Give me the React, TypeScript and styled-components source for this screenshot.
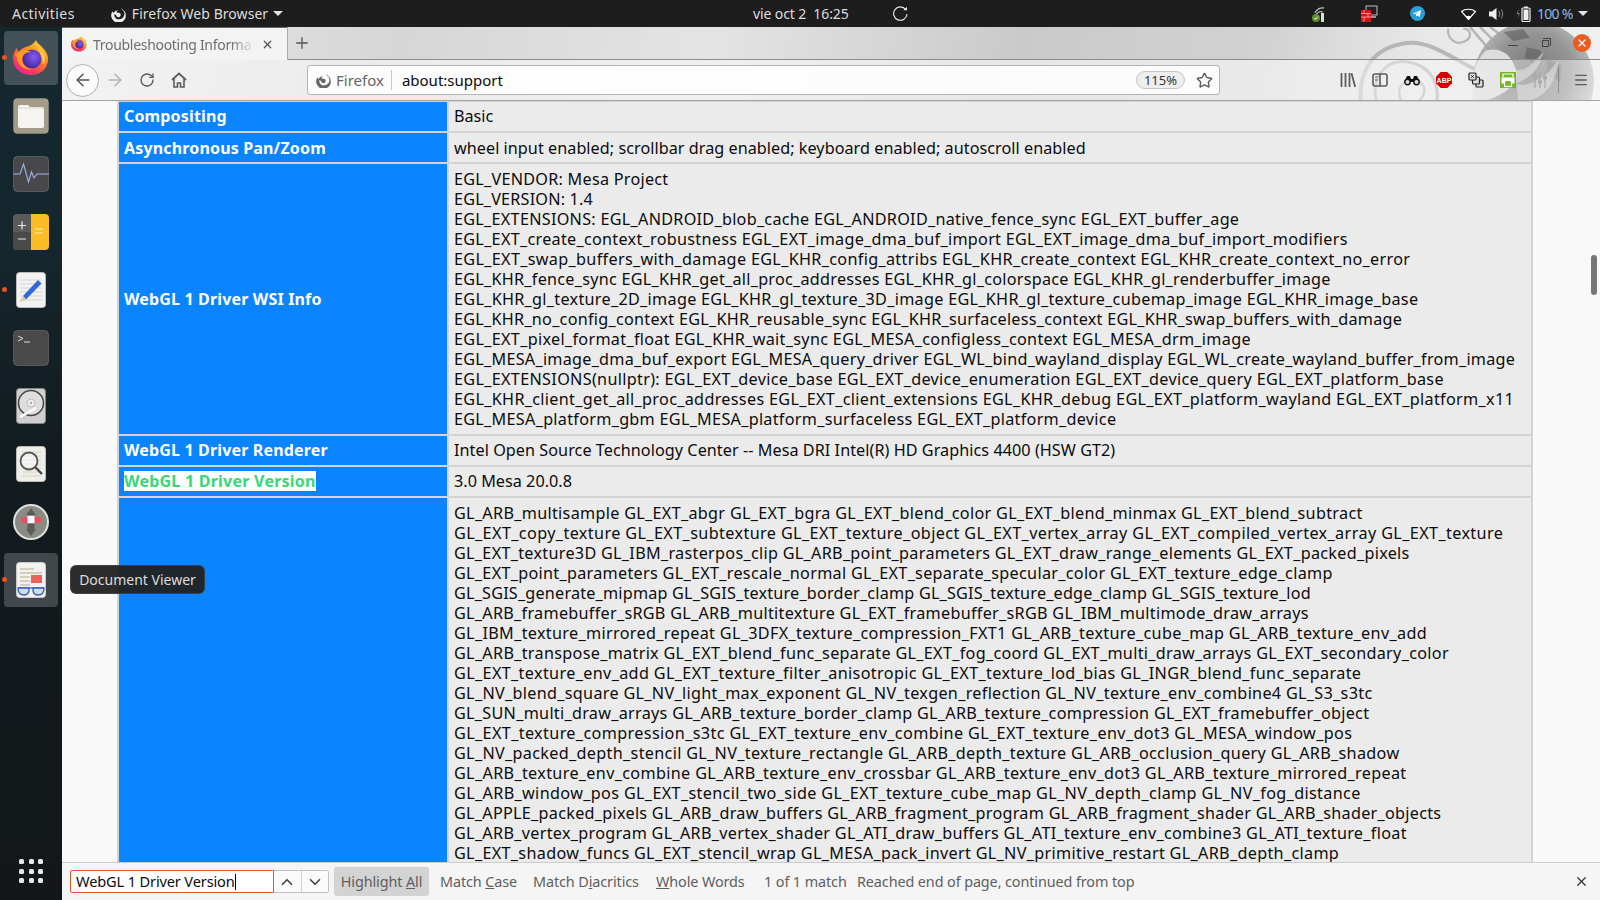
import React from 'react';
import styled, { createGlobalStyle } from 'styled-components';
import { ArrowLeft, ArrowRight, RotateCw, Star, X, Plus, ChevronUp, ChevronDown, Menu } from 'lucide-react';

const UI = `"Noto Sans", "Open Sans", sans-serif`;

const Global = createGlobalStyle`
  html, body { margin: 0; padding: 0; height: 100%; overflow: hidden; }
  #root { height: 100%; }
  * { box-sizing: border-box; }
`;

const Screen = styled.div`
  position: relative; width: 1600px; height: 900px; display: flex; flex-direction: column;
  font-family: ${UI}; overflow: hidden; background: #f9f9fa;
`;

/* ---------- GNOME top bar ---------- */
const TopBar = styled.header`
  height: 27px; flex: none; background: #1d1d1d; color: #dcdcdc; font-size: 14px; letter-spacing: -0.1px;
  display: grid; grid-template-columns: 700px 260px 1fr; align-items: center;
`;
const TopLeft = styled.div`display: flex; align-items: center; padding-left: 12px;`;
const Activities = styled.span`letter-spacing: 0.45px;`;
const AppMenu = styled.div`display: flex; align-items: center; gap: 5px; margin-left: 36px; letter-spacing: 0.05px;`;
const Caret = styled.span`
  width: 0; height: 0; border-left: 5px solid transparent; border-right: 5px solid transparent;
  border-top: 5px solid #e4e4e4; display: inline-block;
`;
const TopCenter = styled.div`display: flex; align-items: center; padding-left: 53px; gap: 44px; white-space: pre;`;
const TopRight = styled.div`display: flex; align-items: center; padding-left: 351px;`;
const Tray = styled.span<{ $w: number }>`display: flex; align-items: center; width: ${p => p.$w}px; flex: none;`;
const BatteryText = styled.span`color: #8fb8e8; margin-left: 6px; margin-right: 5px; white-space: nowrap; letter-spacing: -0.7px;`;

/* ---------- dock ---------- */
const Body = styled.div`flex: 1; display: flex; min-height: 0;`;
const Dock = styled.nav`
  width: 62px; flex: none; display: flex; flex-direction: column; align-items: center; padding-top: 4px; gap: 4px;
  background: linear-gradient(180deg, #14272f 0%, #15262d 25%, #121b1f 50%, #131719 100%);
`;
const DockItem = styled.div<{ $active?: boolean; $dot?: boolean }>`
  position: relative; width: 54px; height: 54px; flex: none; border-radius: 4px;
  display: flex; align-items: center; justify-content: center;
  background: ${p => (p.$active ? 'rgba(255,255,255,0.2)' : 'transparent')};
  &::before {
    content: ''; display: ${p => (p.$dot ? 'block' : 'none')}; position: absolute; left: -2px; top: 24px;
    width: 5px; height: 5px; border-radius: 50%; background: #e95420;
  }
`;
const DockGrid = styled.div`
  margin-top: auto; margin-bottom: 17px; display: grid; grid-template-columns: repeat(3, 5px); gap: 4.5px;
  padding: 0 2px;
`;
const DockDot = styled.span`width: 5px; height: 5px; border-radius: 1.5px; background: #e8e8e8;`;

/* ---------- browser window ---------- */
const Window = styled.main`flex: 1; min-width: 0; display: flex; flex-direction: column;`;
const Header = styled.div`
  position: relative; flex: none;
  background: linear-gradient(100deg, #e9e9e9 0%, #d6d6d6 22%, #e4e4e4 42%, #cacaca 62%, #d2d2d2 78%, #e8e8e8 88%, #f0f0f0 100%);
`;
const Persona = styled.svg`position: absolute; right: 0; top: 0; width: 270px; height: 75px; pointer-events: none;`;
const TabStrip = styled.div`
  position: relative; height: 33px; display: flex; align-items: stretch; border-bottom: 1px solid #8c8c8c;
`;
const Tab = styled.div`
  width: 225px; height: 33px; background: #f3f3f3; border-top: 1px solid #666; display: flex; align-items: center;
  padding: 0 13px 0 9px; gap: 6px; color: #6e6e6e; font-size: 14px; letter-spacing: -0.3px; box-shadow: 1px 0 0 #aaa;
`;
const TabTitle = styled.span`
  flex: 1; overflow: hidden; white-space: nowrap;
  -webkit-mask-image: linear-gradient(90deg, #000 85%, transparent 100%);
  mask-image: linear-gradient(90deg, #000 85%, transparent 100%);
`;
const NewTab = styled.div`width: 32px; display: flex; align-items: center; justify-content: center; color: #555; margin-left: -1px;`;
const WinControls = styled.div`margin-left: auto; display: flex; align-items: center; gap: 24px; padding-right: 9px;`;
const WinMin = styled.span`width: 10px; height: 1px; background: #444; margin-top: 5px;`;
const WinRestore = styled.span`
  position: relative; width: 7px; height: 7px; border: 1px solid #444; margin-top: 1px;
  &::after { content: ''; position: absolute; right: -3px; top: -3px; width: 7px; height: 7px; border: 1px solid #444; border-left: 0; border-bottom: 0; }
`;
const WinClose = styled.span`
  width: 18px; height: 18px; border-radius: 50%; background: #ef5c22; color: #fff; display: flex; align-items: center; justify-content: center;
`;
const NavBar = styled.div`
  position: relative; height: 41px; display: flex; align-items: center; padding-left: 4px;
  background: linear-gradient(90deg, rgba(248,248,248,0.62) 0%, rgba(248,248,248,0.62) 82%, rgba(248,248,248,0.34) 92%, rgba(248,248,248,0.5) 100%);
  border-bottom: 1px solid #a3a3a3;
`;
const BackBtn = styled.div`
  width: 33px; height: 33px; border-radius: 50%; background: #fbfbfb; border: 1px solid #b0b0b0; color: #555;
  display: flex; align-items: center; justify-content: center; flex: none;
`;
const NavBtn = styled.div<{ $dim?: boolean; $w?: number }>`
  width: ${p => p.$w ?? 32}px; height: 32px; flex: none; display: flex; align-items: center; justify-content: center;
  color: ${p => (p.$dim ? '#b3b3b3' : '#5c5c5c')};
`;
const UrlBar = styled.div`
  width: 913px; height: 30px; margin-left: 112px; flex: none; display: flex; align-items: center; border-radius: 3px;
  background: rgba(255,255,255,0.85); border: 1px solid #b5b5b5; font-size: 15px;
`;
const Identity = styled.div`
  display: flex; align-items: center; gap: 4px; padding: 0 7px 0 8px; height: 20px; border-right: 1px solid #c8c8c8;
  color: #666;
`;
const UrlText = styled.div`flex: 1; padding-left: 10px; color: #0c0c0d;`;
const ZoomPill = styled.div`
  width: 49px; height: 18px; border-radius: 9px; background: #eee; border: 1px solid #c4c4c4; font-size: 13px;
  display: flex; align-items: center; justify-content: center; color: #333; margin-right: 11px;
`;
const Stars = styled.div`width: 18px; margin-right: 5px; display: flex; color: #5c5c5c;`;
const Tools = styled.div`display: flex; align-items: center; margin-left: 112px;`;
const ToolSep = styled.span`width: 1px; height: 26px; background: rgba(90,90,90,0.45); margin: 0 14px 0 2px;`;

/* ---------- page ---------- */
const Content = styled.section`flex: 1; min-height: 0; overflow: hidden; background: #f9f9fa; position: relative; padding-left: 55px;`;
const Table = styled.table`
  width: 1416px; table-layout: fixed; margin-top: -1px; border-collapse: separate; border-spacing: 2px; background: #d4d4d6;
  font-size: 16.2px; line-height: 20px; color: #0c0c0d;
`;
const Th = styled.th<{ $h: number; $nudge: number }>`
  width: 328px; height: ${p => p.$h}px; padding: 0 5px ${p => p.$nudge * 2}px; background: #0a84ff; color: #fff; text-align: left; font-weight: 700;
  font-size: 16px; vertical-align: middle; letter-spacing: 0.16px;
`;
const Td = styled.td<{ $h: number; $nudge: number }>`
  height: ${p => p.$h}px; padding: ${p => 4.5 - p.$nudge}px 5px 0; background: #ebebeb; vertical-align: top; white-space: nowrap;
`;
const Line = styled.div<{ $ls: number }>`height: 20px; letter-spacing: ${p => p.$ls}px;`;
const Hit = styled.span`background: #fff; color: #38d878; display: inline-block; line-height: 20px; letter-spacing: 0.24px;`;
const ScrollThumb = styled.div`position: absolute; right: 3px; top: 154px; width: 6px; height: 40px; border-radius: 3px; background: #777;`;

/* ---------- find bar ---------- */
const FindBar = styled.footer`
  height: 38px; flex: none; background: #f5f5f5; border-top: 1px solid #cdcdcd; display: flex; align-items: center;
  padding-left: 8px; font-size: 14.4px; color: #5e5e5e; white-space: nowrap; letter-spacing: -0.1px;
`;
const FindGroup = styled.div`display: flex; width: 259px; height: 23px; border: 1px solid #c2c2c2; border-radius: 2px; flex: none; background: #fafafa;`;
const FindInput = styled.div`
  width: 204px; margin: -1px 0 -1px -1px; flex: none; background: #fff; border: 1px solid #e95420; border-radius: 2px 0 0 2px;
  padding: 0 5px; color: #0c0c0d; font-size: 14.6px; line-height: 21px; display: flex; align-items: center; letter-spacing: -0.15px;
`;
const Cursor = styled.span`width: 1px; height: 16px; background: #000; flex: none;`;
const FindArrow = styled.div`flex: 1; display: flex; align-items: center; justify-content: center; color: #444; & + & { border-left: 1px solid #d0d0d0; }`;
const Highlight = styled.div`
  height: 29px; width: 95px; border-radius: 3px; background: #d3d3d3; display: flex; align-items: center; justify-content: center; margin-left: 5px; flex: none;
`;
const FindLabel = styled.span<{ $ml: number; $w: number }>`margin-left: ${p => p.$ml}px; width: ${p => p.$w}px; flex: none;`;
const FindClose = styled.div`margin-left: auto; margin-right: 11px; display: flex; color: #333;`;

const Tooltip = styled.div`
  position: absolute; left: 70px; top: 565px; width: 135px; height: 29px; border-radius: 6px; background: rgba(33,33,33,0.95);
  color: #dedede; font-size: 14px; display: flex; align-items: center; justify-content: center; border: 1px solid rgba(120,140,170,.25);
`;

/* ---------- drawings ---------- */
const FirefoxLogo = ({ size }: { size: number }) => (
  <svg width={size} height={size} viewBox="0 0 36 36">
    <defs>
      <linearGradient id="ffg" x1="0.8" y1="0" x2="0.2" y2="1">
        <stop offset="0" stopColor="#ffd43a" /><stop offset="0.4" stopColor="#ff8a1f" /><stop offset="0.75" stopColor="#ff3b5c" /><stop offset="1" stopColor="#e3209b" />
      </linearGradient>
      <radialGradient id="ffp" cx="0.6" cy="0.4" r="0.7">
        <stop offset="0" stopColor="#8a5cf0" /><stop offset="1" stopColor="#36208f" />
      </radialGradient>
    </defs>
    <path fill="url(#ffg)" d="M23 0c1 3 3 4 6 7 4 4 6 8 6 12 0 9-7 16-17 16C8 35 0 28 0 19 0 14 2 10 4 8c0 2 1 3 2 4 2-3 4-4 7-5 3-1 7-2 10-7z" />
    <circle cx="19" cy="19" r="9.5" fill="url(#ffp)" />
    <path fill="#ff9a24" d="M2 15c3-3 6-5 9-5 3 0 5 1 7 2-5 0-9 3-9 7 0 6 5 10 11 10-8 2-16-4-16-11 0-1-1-2-2-3z" />
    <path fill="#ffc640" d="M22 3c5 3 10 9 10 15 0 3-1 5-2 7 0-6-3-14-8-22z" />
  </svg>
);
const FoxMono = ({ size, color }: { size: number; color: string }) => (
  <svg width={size} height={size} viewBox="0 0 24 24" fill={color}>
    <path fillRule="evenodd" d="M15 1c0 2 1 3 2.500 4.200A11 11 0 1 1 2.200 8c.3 1 .8 2 1.800 2.500C5 8 8 6.500 11 6.500c-1.500.7-2.500 1.500-3 2.800 0 0 1 .7 4 .7a3.500 3.500 0 1 1-4.500 3.500L5 12c-.5 5 3 8 7 8a8 8 0 0 0 7-12c-1.500-2-4-3.500-4-7z" />
  </svg>
);

const tile = (bg: string, body: React.ReactNode, r = 4) => (
  <svg width="36" height="36" viewBox="0 0 36 36">
    <rect x="0.5" y="0.5" width="35" height="35" rx={r} fill={bg} stroke="rgba(255,255,255,.18)" />
    {body}
  </svg>
);
const FilesIcon = () => tile('#a49c88', <>
  <path d="M5 9a2 2 0 0 1 2-2h8l2 2h12a2 2 0 0 1 2 2v17a2 2 0 0 1-2 2H7a2 2 0 0 1-2-2z" fill="#f6f5f2" />
  <path d="M5 10h26" stroke="#d8d4ca" strokeWidth="1" />
</>);
const MonitorIcon = () => tile('#48484a', <path d="M0 18h7l3.500-10 5 18 3-10 2.500 6 3-4h12" fill="none" stroke="#9fb4e8" strokeWidth="1.100" />);
const CalcIcon = () => (
  <svg width="36" height="36" viewBox="0 0 36 36">
    <defs><clipPath id="cc"><rect width="36" height="36" rx="4" /></clipPath></defs>
    <g clipPath="url(#cc)">
      <rect width="18" height="36" fill="#5a5a5a" /><rect y="18" width="18" height="18" fill="#4a4a4a" />
      <rect x="18" width="18" height="36" fill="#fbbd25" />
    </g>
    <path d="M5 11.500h8M9 7.500v8M5 25h8" stroke="#e8e8e8" strokeWidth="1.200" />
    <path d="M22 15h8M22 19h8" stroke="#fde08c" strokeWidth="1.400" />
  </svg>
);
const EditorIcon = () => (
  <svg width="30" height="36" viewBox="0 0 30 36">
    <rect width="29" height="35" x="0.500" y="0.500" rx="3" fill="#f2f2f2" stroke="#bbb" />
    <path d="M4 8h22M4 12h22M4 16h22M4 20h22M4 24h22M4 28h22" stroke="#d4d4d4" />
    <path d="M7 24L22 8l3.500 3.500L10 27.500z" fill="#3068d8" /><path d="M4 30l3-6 3 3.500z" fill="#e8c89c" />
  </svg>
);
const TerminalIcon = () => tile('#4a4a4a', <>
  <path d="M5 6l5 2.500L5 11" fill="none" stroke="#ddd" strokeWidth="1" /><path d="M11 12h6" stroke="#ddd" strokeWidth="1" />
</>);
const DiskIcon = () => (
  <svg width="30" height="36" viewBox="0 0 30 36">
    <rect x="0.500" y="0.500" width="29" height="35" rx="3" fill="#cfcfcf" stroke="#888" />
    <circle cx="15" cy="15" r="12.500" fill="#dedede" stroke="#444" strokeWidth="1.500" />
    <circle cx="15" cy="15" r="4" fill="#eee" stroke="#bbb" /><circle cx="15" cy="15" r="1.200" fill="#aaa" />
    <path d="M4 29l16-9" stroke="#fff" strokeWidth="2.500" />
  </svg>
);
const SearchIcon = () => (
  <svg width="30" height="36" viewBox="0 0 30 36">
    <rect x="0.500" y="0.500" width="29" height="35" rx="3" fill="#efefe9" stroke="#bbb" />
    <path d="M6 6h19M6 10h19M6 14h19M6 18h19M6 22h19M6 26h19M6 30h19" stroke="#d8d6c4" />
    <circle cx="13" cy="15" r="8.500" fill="rgba(255,255,255,.4)" stroke="#555" strokeWidth="1.800" />
    <path d="M19 21l7 7" stroke="#444" strokeWidth="2.400" />
  </svg>
);
const HelpIcon = () => (
  <svg width="36" height="36" viewBox="0 0 36 36">
    <circle cx="18" cy="18" r="17" fill="#8b8b85" stroke="#dfdfdb" strokeWidth="2" />
    <path d="M18 4l5 7H13zM18 32l5-7H13z" fill="#5c5c58" />
    <rect x="8" y="13" width="20" height="6" rx="2" fill="#ee4d5f" /><rect x="14.500" y="12" width="7" height="7" fill="#fff" />
    <rect x="14.500" y="20" width="7" height="5" fill="#5c5c58" />
  </svg>
);
const ViewerIcon = () => (
  <svg width="30" height="36" viewBox="0 0 30 36">
    <rect x="0.500" y="0.500" width="29" height="35" rx="3" fill="#f2f2f0" stroke="#ccc" />
    <path d="M4 7h14M4 11h22M4 15h10M4 19h10M4 23h10" stroke="#c9c4ac" strokeWidth="1.400" />
    <rect x="15" y="13" width="11" height="8" fill="#f0605a" />
    <path d="M2 26h26" stroke="#3f6fbf" strokeWidth="1.400" fill="none" />
    <path d="M2 26h11v3q-1 4-5 4-6 0-6-7zM17 26h11q0 7-6 7-4 0-5-4z" fill="#cfdcf0" stroke="#2c62b5" strokeWidth="1.300" />
  </svg>
);

const SignalIcon = () => (
  <svg width="16" height="16" viewBox="0 0 16 16">
    <path d="M4 7a8 8 0 0 1 9-5M5 10a5 5 0 0 1 7-4" fill="none" stroke="#bbb" strokeWidth="1.300" />
    <rect x="10" y="7" width="3" height="9" fill="#ddd" />
    <circle cx="5" cy="12" r="4" fill="#5c8f2a" /><path d="M3.300 12l1.200 1.300 2.200-2.600" stroke="#fff" fill="none" />
  </svg>
);
const FirewallIcon = () => (
  <svg width="18" height="18" viewBox="0 0 18 18">
    <rect x="6" y="1" width="11" height="9" fill="#222" stroke="#bbb" /><path d="M9 12h7" stroke="#bbb" strokeWidth="1.500" />
    <rect x="1" y="5" width="10" height="12" fill="#d01616" /><path d="M1 8.500h10M1 12h10M4 5v3.500M8 8.500V12M4 12v5" stroke="#ffb0a8" strokeWidth=".8" />
  </svg>
);
const TelegramIcon = () => (
  <svg width="15" height="15" viewBox="0 0 15 15">
    <circle cx="7.500" cy="7.500" r="7.500" fill="#2a9ed8" /><path d="M2.800 7.400l8.300-3.300-1.400 7-2.400-1.700-1.200 1.200-.2-2.300 3.600-3-4.500 2.700z" fill="#fff" />
  </svg>
);
const WifiIcon = () => (
  <svg width="15" height="12" viewBox="0 0 15 12">
    <path d="M.500 3.500C4 .5 11 .5 14.500 3.500L7.500 11.500z" fill="none" stroke="#fff" strokeWidth="1.200" /><path d="M5 8.500q2.500-1.500 5 0l-2.500 3z" fill="#fff" />
  </svg>
);
const VolumeIcon = () => (
  <svg width="15" height="14" viewBox="0 0 15 14">
    <path d="M0 4.500h3L7.500 1v12L3 9.500H0z" fill="#eee" /><path d="M10 4q1.500 3 0 6M12.500 2.500q2.500 4.500 0 9" fill="none" stroke="#888" />
  </svg>
);
const BatteryIcon = () => (
  <svg width="15" height="16" viewBox="0 0 15 16">
    <path d="M3 2L0.500 8H2.500L1.500 13 4 7H2z" fill="#777" />
    <rect x="6" y="2" width="8" height="13.500" rx="1" fill="none" stroke="#eee" strokeWidth="1.200" /><rect x="8" y="0.500" width="4" height="1.500" fill="#eee" />
    <rect x="7.500" y="3.500" width="5" height="10.500" fill="#eee" />
  </svg>
);
const SpinIcon = () => (
  <svg width="15" height="15" viewBox="0 0 15 15" fill="none" stroke="#eee" strokeWidth="1.100">
    <path d="M12.700 3.600A6.700 6.700 0 1 0 14 8" /><path d="M14 .8v3.500h-3.500z" fill="#eee" stroke="none" />
  </svg>
);
const HomeIcon = () => (
  <svg width="16" height="16" viewBox="0 0 16 16" fill="none" stroke="#5c5c5c" strokeWidth="1.800">
    <path d="M1 8l7-6.500L15 8" /><path d="M3 6.500V15h3.500v-4h3v4H13V6.500" strokeWidth="1.600" />
  </svg>
);
const LibraryIcon = () => (
  <svg width="16" height="16" viewBox="0 0 16 16" stroke="#5c5c5c" strokeWidth="1.800"><path d="M1.500 1v14M5.500 1v14M9.500 1v14M11.500 1.300l3.700 13.700" /></svg>
);
const SidebarIcon = () => (
  <svg width="16" height="14" viewBox="0 0 16 14" fill="none" stroke="#5c5c5c" strokeWidth="1.600">
    <rect x="1" y="1" width="14" height="12" rx="2" /><path d="M8 1v12" /><path d="M3 4h3M3 7h3" strokeWidth="1.200" />
  </svg>
);
const BinocularIcon = () => (
  <svg width="16" height="12" viewBox="0 0 16 12">
    <path d="M3 2h3l1 3h2l1-3h3l3 6H0z" fill="#111" /><circle cx="3.500" cy="8" r="2.700" fill="#ddd" stroke="#111" strokeWidth="1.400" /><circle cx="12.500" cy="8" r="2.700" fill="#ddd" stroke="#111" strokeWidth="1.400" />
  </svg>
);
const AbpIcon = () => (
  <svg width="16" height="16" viewBox="0 0 16 16">
    <path d="M4.700 0h6.600L16 4.700v6.600L11.300 16H4.700L0 11.300V4.700z" fill="#d40000" />
    <text x="8" y="10.700" textAnchor="middle" fontFamily="Liberation Sans, sans-serif" fontWeight="700" fontSize="7" fill="#fff">ABP</text>
  </svg>
);
const DiceIcon = () => (
  <svg width="16" height="16" viewBox="0 0 16 16" fill="#ddd" stroke="#222" strokeWidth="1.200">
    <rect x="8" y="8" width="7" height="7" rx="1" /><rect x="4.500" y="5" width="7" height="7" rx="1" /><rect x="1" y="1" width="7" height="7" rx="1" />
    <path d="M3 3l3 3M6 3l-3 3" strokeWidth=".8" />
  </svg>
);
const PrintIcon = () => (
  <svg width="16" height="16" viewBox="0 0 16 16">
    <rect width="16" height="16" fill="#76b52a" /><path d="M3 5V2h10v3" fill="none" stroke="#fff" strokeWidth="1.200" />
    <rect x="1.500" y="5.500" width="13" height="6" fill="#fff" /><rect x="4.500" y="8.500" width="7" height="6" fill="#76b52a" stroke="#fff" strokeWidth="1.200" />
  </svg>
);
const SlidersIcon = () => (
  <svg width="16" height="16" viewBox="0 0 16 16" stroke="#a8a8a8" strokeWidth="1.200">
    <path d="M3 0v16M8 0v16M13 0v16" /><path d="M1 5h4M6 10h4M11 6h4" strokeWidth="3" />
  </svg>
);

const PersonaArt = () => (
  <Persona viewBox="0 0 810 225">
    <defs>
      <radialGradient id="glb" cx="0.5" cy="0.42" r="0.58">
        <stop offset="0" stopColor="#6f6f6f" /><stop offset="0.55" stopColor="#8a8a8a" /><stop offset="0.85" stopColor="#b2b2b2" /><stop offset="1" stopColor="#dedede" />
      </radialGradient>
    </defs>
    <g fill="none" stroke="#ababab" strokeWidth="12" opacity="0.8">
      <path d="M92 225C85 130 130 60 230 48 300 40 370 95 440 130" />
      <path d="M140 225C120 150 170 95 235 105 300 115 330 170 320 225" strokeWidth="9" />
      <path d="M215 225C190 170 240 145 270 165 295 185 280 215 260 225" strokeWidth="7" />
      <path d="M355 5c-5 30 25 55 55 35 18-14 8-38-10-34" strokeWidth="7" />
      <path d="M420 0l60 70M450 0l50 50M480 0l40 30" strokeWidth="8" />
    </g>
    <circle cx="610" cy="165" r="182" fill="url(#glb)" opacity="0.9" />
    <path d="M470 70c40-10 70 10 85 50 20 40-25 90-110 105h-18c-5-50 0-120 43-155z" fill="#e4e4e4" opacity="0.9" />
    <path d="M590 60l40 10 10 25-30 15-25-20zM520 15l60-8 20 25-50 10zM650 95l45 20-5 50-40-25z" fill="#5e5e5e" opacity="0.6" />
    <path d="M555 130c40 0 50-20 85-55-10 50-40 80-85 95 30 10 80 0 130-70-10 90-60 125-120 125z" fill="#dcdcdc" opacity="0.55" />
  </Persona>
);

/* ---------- data: each line with the tracking that gives it the reference's width ---------- */
type L = [string, number];
const wsi: L[] = [
  ['EGL_VENDOR: Mesa Project', 0.255],
  ['EGL_VERSION: 1.4', 0.19],
  ['EGL_EXTENSIONS: EGL_ANDROID_blob_cache EGL_ANDROID_native_fence_sync EGL_EXT_buffer_age', 0.278],
  ['EGL_EXT_create_context_robustness EGL_EXT_image_dma_buf_import EGL_EXT_image_dma_buf_import_modifiers', 0.287],
  ['EGL_EXT_swap_buffers_with_damage EGL_KHR_config_attribs EGL_KHR_create_context EGL_KHR_create_context_no_error', 0.325],
  ['EGL_KHR_fence_sync EGL_KHR_get_all_proc_addresses EGL_KHR_gl_colorspace EGL_KHR_gl_renderbuffer_image', 0.262],
  ['EGL_KHR_gl_texture_2D_image EGL_KHR_gl_texture_3D_image EGL_KHR_gl_texture_cubemap_image EGL_KHR_image_base', 0.298],
  ['EGL_KHR_no_config_context EGL_KHR_reusable_sync EGL_KHR_surfaceless_context EGL_KHR_swap_buffers_with_damage', 0.265],
  ['EGL_EXT_pixel_format_float EGL_KHR_wait_sync EGL_MESA_configless_context EGL_MESA_drm_image', 0.314],
  ['EGL_MESA_image_dma_buf_export EGL_MESA_query_driver EGL_WL_bind_wayland_display EGL_WL_create_wayland_buffer_from_image', 0.26],
  ['EGL_EXTENSIONS(nullptr): EGL_EXT_device_base EGL_EXT_device_enumeration EGL_EXT_device_query EGL_EXT_platform_base', 0.32],
  ['EGL_KHR_client_get_all_proc_addresses EGL_EXT_client_extensions EGL_KHR_debug EGL_EXT_platform_wayland EGL_EXT_platform_x11', 0.318],
  ['EGL_MESA_platform_gbm EGL_MESA_platform_surfaceless EGL_EXT_platform_device', 0.286],
];
const ext: L[] = [
  ['GL_ARB_multisample GL_EXT_abgr GL_EXT_bgra GL_EXT_blend_color GL_EXT_blend_minmax GL_EXT_blend_subtract', 0.307],
  ['GL_EXT_copy_texture GL_EXT_subtexture GL_EXT_texture_object GL_EXT_vertex_array GL_EXT_compiled_vertex_array GL_EXT_texture', 0.39],
  ['GL_EXT_texture3D GL_IBM_rasterpos_clip GL_ARB_point_parameters GL_EXT_draw_range_elements GL_EXT_packed_pixels', 0.297],
  ['GL_EXT_point_parameters GL_EXT_rescale_normal GL_EXT_separate_specular_color GL_EXT_texture_edge_clamp', 0.297],
  ['GL_SGIS_generate_mipmap GL_SGIS_texture_border_clamp GL_SGIS_texture_edge_clamp GL_SGIS_texture_lod', 0.206],
  ['GL_ARB_framebuffer_sRGB GL_ARB_multitexture GL_EXT_framebuffer_sRGB GL_IBM_multimode_draw_arrays', 0.287],
  ['GL_IBM_texture_mirrored_repeat GL_3DFX_texture_compression_FXT1 GL_ARB_texture_cube_map GL_ARB_texture_env_add', 0.33],
  ['GL_ARB_transpose_matrix GL_EXT_blend_func_separate GL_EXT_fog_coord GL_EXT_multi_draw_arrays GL_EXT_secondary_color', 0.307],
  ['GL_EXT_texture_env_add GL_EXT_texture_filter_anisotropic GL_EXT_texture_lod_bias GL_INGR_blend_func_separate', 0.356],
  ['GL_NV_blend_square GL_NV_light_max_exponent GL_NV_texgen_reflection GL_NV_texture_env_combine4 GL_S3_s3tc', 0.31],
  ['GL_SUN_multi_draw_arrays GL_ARB_texture_border_clamp GL_ARB_texture_compression GL_EXT_framebuffer_object', 0.289],
  ['GL_EXT_texture_compression_s3tc GL_EXT_texture_env_combine GL_EXT_texture_env_dot3 GL_MESA_window_pos', 0.371],
  ['GL_NV_packed_depth_stencil GL_NV_texture_rectangle GL_ARB_depth_texture GL_ARB_occlusion_query GL_ARB_shadow', 0.321],
  ['GL_ARB_texture_env_combine GL_ARB_texture_env_crossbar GL_ARB_texture_env_dot3 GL_ARB_texture_mirrored_repeat', 0.337],
  ['GL_ARB_window_pos GL_EXT_stencil_two_side GL_EXT_texture_cube_map GL_NV_depth_clamp GL_NV_fog_distance', 0.353],
  ['GL_APPLE_packed_pixels GL_ARB_draw_buffers GL_ARB_fragment_program GL_ARB_fragment_shader GL_ARB_shader_objects', 0.28],
  ['GL_ARB_vertex_program GL_ARB_vertex_shader GL_ATI_draw_buffers GL_ATI_texture_env_combine3 GL_ATI_texture_float', 0.306],
  ['GL_EXT_shadow_funcs GL_EXT_stencil_wrap GL_MESA_pack_invert GL_NV_primitive_restart GL_ARB_depth_clamp', 0.319],
];

const Row = ({ title, lines, h, nudge = 0 }: { title: React.ReactNode; lines: L[]; h: number; nudge?: number }) => (
  <tr>
    <Th $h={h} $nudge={nudge}>{title}</Th>
    <Td $h={h} $nudge={nudge}>{lines.map(([t, ls]) => <Line key={t} $ls={ls}>{t}</Line>)}</Td>
  </tr>
);

export default function App() {
  return (
    <Screen>
      <Global />
      <TopBar>
        <TopLeft>
          <Activities>Activities</Activities>
          <AppMenu><FoxMono size={16} color="#eee" />Firefox Web Browser<Caret /></AppMenu>
        </TopLeft>
        <TopCenter>
          <span>vie oct 2  16:25</span>
          <SpinIcon />
        </TopCenter>
        <TopRight>
          <Tray $w={49}><SignalIcon /></Tray>
          <Tray $w={50}><FirewallIcon /></Tray>
          <Tray $w={51}><TelegramIcon /></Tray>
          <Tray $w={28}><WifiIcon /></Tray>
          <Tray $w={27}><VolumeIcon /></Tray>
          <BatteryIcon />
          <BatteryText>100 %</BatteryText>
          <Caret />
        </TopRight>
      </TopBar>
      <Body>
        <Dock>
          <DockItem $active $dot><FirefoxLogo size={36} /></DockItem>
          <DockItem><FilesIcon /></DockItem>
          <DockItem><MonitorIcon /></DockItem>
          <DockItem><CalcIcon /></DockItem>
          <DockItem $dot><EditorIcon /></DockItem>
          <DockItem><TerminalIcon /></DockItem>
          <DockItem><DiskIcon /></DockItem>
          <DockItem><SearchIcon /></DockItem>
          <DockItem><HelpIcon /></DockItem>
          <DockItem $active $dot><ViewerIcon /></DockItem>
          <DockGrid>{Array.from({ length: 9 }, (_, i) => <DockDot key={i} />)}</DockGrid>
        </Dock>
        <Window>
          <Header>
            <PersonaArt />
            <TabStrip>
              <Tab>
                <FirefoxLogo size={16} />
                <TabTitle>Troubleshooting Informa</TabTitle>
                <X size={13} color="#555" strokeWidth={2.2} />
              </Tab>
              <NewTab><Plus size={18} strokeWidth={1.8} /></NewTab>
              <WinControls>
                <WinMin /><WinRestore />
                <WinClose><X size={12} strokeWidth={2.4} /></WinClose>
              </WinControls>
            </TabStrip>
            <NavBar>
              <BackBtn><ArrowLeft size={20} strokeWidth={1.8} /></BackBtn>
              <NavBtn $dim><ArrowRight size={20} strokeWidth={1.8} /></NavBtn>
              <NavBtn><RotateCw size={16} strokeWidth={2} /></NavBtn>
              <NavBtn><HomeIcon /></NavBtn>
              <UrlBar>
                <Identity><FoxMono size={16} color="#666" />Firefox</Identity>
                <UrlText>about:support</UrlText>
                <ZoomPill>115%</ZoomPill>
                <Stars><Star size={17} strokeWidth={2} /></Stars>
              </UrlBar>
              <Tools>
                <NavBtn><LibraryIcon /></NavBtn>
                <NavBtn><SidebarIcon /></NavBtn>
                <NavBtn><BinocularIcon /></NavBtn>
                <NavBtn><AbpIcon /></NavBtn>
                <NavBtn><DiceIcon /></NavBtn>
                <NavBtn><PrintIcon /></NavBtn>
                <NavBtn><SlidersIcon /></NavBtn>
                <ToolSep />
                <NavBtn $w={16}><Menu size={18} strokeWidth={2} /></NavBtn>
              </Tools>
            </NavBar>
          </Header>
          <Content>
            <Table>
              <tbody>
                <Row title="Compositing" lines={[['Basic', 0]]} h={29} nudge={1} />
                <Row title="Asynchronous Pan/Zoom" lines={[['wheel input enabled; scrollbar drag enabled; keyboard enabled; autoscroll enabled', 0.04]]} h={29} />
                <Row title="WebGL 1 Driver WSI Info" lines={wsi} h={270} />
                <Row title="WebGL 1 Driver Renderer" lines={[['Intel Open Source Technology Center -- Mesa DRI Intel(R) HD Graphics 4400 (HSW GT2)', 0.05]]} h={29} nudge={1} />
                <Row title={<Hit>WebGL 1 Driver Version</Hit>} lines={[['3.0 Mesa 20.0.8', 0.02]]} h={29} nudge={1} />
                <Row title="" lines={ext} h={370} />
              </tbody>
            </Table>
            <ScrollThumb />
          </Content>
          <FindBar>
            <FindGroup>
              <FindInput>WebGL 1 Driver Version<Cursor /></FindInput>
              <FindArrow><ChevronUp size={18} strokeWidth={2.2} /></FindArrow>
              <FindArrow><ChevronDown size={18} strokeWidth={2.2} /></FindArrow>
            </FindGroup>
            <Highlight><span>Highlight <u>A</u>ll</span></Highlight>
            <FindLabel $ml={11} $w={93}>Match <u>C</u>ase</FindLabel>
            <FindLabel $ml={0} $w={123}>Match D<u>i</u>acritics</FindLabel>
            <FindLabel $ml={0} $w={108}><u>W</u>hole Words</FindLabel>
            <FindLabel $ml={0} $w={93}>1 of 1 match</FindLabel>
            <FindLabel $ml={0} $w={280}>Reached end of page, continued from top</FindLabel>
            <FindClose><X size={15} strokeWidth={2} /></FindClose>
          </FindBar>
        </Window>
      </Body>
      <Tooltip>Document Viewer</Tooltip>
    </Screen>
  );
}
